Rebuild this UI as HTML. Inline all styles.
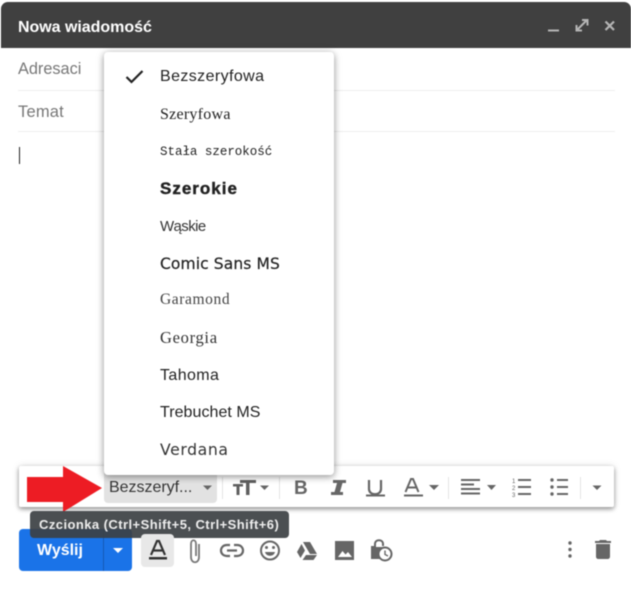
<!DOCTYPE html>
<html lang="pl"><head><meta charset="utf-8"><title>Nowa wiadomość</title>
<style>
html,body{margin:0;padding:0;background:#fff}
body{width:631px;height:589px;overflow:hidden;position:relative;font-family:"Liberation Sans",sans-serif}
#r{position:absolute;left:0;top:0;width:631px;height:589px;filter:blur(.5px)}
.a{position:absolute;white-space:nowrap}
.m{position:absolute;left:160px;color:#222;line-height:20px;white-space:nowrap}
svg{position:absolute;overflow:visible}
.sep{position:absolute;top:477px;width:1px;height:22px;background:#e3e3e3}
</style></head><body><div id="r">
<div class="a" style="left:1px;top:2px;width:630px;height:46px;background:#404040;border-radius:7px 7px 0 0"></div>
<div class="a" style="left:18px;top:18px;font-size:16px;font-weight:bold;color:#fff;line-height:20px;letter-spacing:-.03px">Nowa wiadomość</div>
<svg style="left:0;top:0" width="631" height="60" fill="none" stroke="#b5b5b5">
<path d="M548 30.500H559" stroke-width="2"/>
<path d="M577 30L587 20M582 20H587.500V25.500M576.500 25V30.500H582" stroke-width="2"/>
<path d="M605.500 21.500L614 30M614 21.500L605.500 30" stroke-width="2.200"/>
</svg>
<div class="a" style="left:18px;top:59px;font-size:16.300px;color:#777;line-height:20px">Adresaci</div>
<div class="a" style="left:18px;top:90px;width:597px;height:1px;background:#eee"></div>
<div class="a" style="left:18px;top:102px;font-size:16.500px;color:#777;line-height:20px;letter-spacing:.2px">Temat</div>
<div class="a" style="left:18px;top:131px;width:597px;height:1px;background:#eee"></div>
<div class="a" style="left:19px;top:147px;width:1px;height:17px;background:#222"></div>

<div class="a" style="left:19px;top:466px;width:595px;height:41px;background:#fff;border-radius:2px;box-shadow:0 2px 5px rgba(0,0,0,.4),0 0 8px rgba(0,0,0,.12)"></div>
<div class="a" style="left:104px;top:466px;width:113px;height:37px;background:#e2e2e2;border-radius:0 0 4px 4px"></div>
<div class="a" style="left:109px;top:478px;font-size:16px;color:#333;line-height:20px;letter-spacing:-.02px">Bezszeryf...</div>
<svg style="left:0;top:460px" width="631" height="129">
<g fill="#666">
<path d="M203 25.500H212L207.500 30Z"/>
<path d="M260 25.500H269L264.500 30Z"/>
<path d="M429 25H439L434 30Z"/>
<path d="M487 25H496L491.500 30Z"/>
<path d="M592.500 25.500H601.500L597 30Z"/>
</g>
<g fill="#5f5f5f">
<path d="M233 24H243V26.500H239.500V35H236.500V26.500H233Z"/>
<path d="M240 20H256V23H249.500V35H246V23H240Z"/>
</g>
<text x="294" y="34" font-size="19" font-weight="bold" fill="#666" font-family="Liberation Sans">B</text>
<path d="M333 20H346V23H342.500L340 32H343V35H331V32H334.500L337 23H333Z" fill="#666"/>
<path d="M369 20V29C369 36 381 36 381 29V20" fill="none" stroke="#666" stroke-width="2.200"/>
<rect x="366" y="34.500" width="19" height="2" fill="#666"/>
<path d="M405.500 32L411 19H413L418.500 32" fill="none" stroke="#666" stroke-width="2"/>
<path d="M408 27.500H416" stroke="#666" stroke-width="2"/>
<rect x="404" y="34.500" width="19" height="2" fill="#666"/>
<path d="M461 20H480M461 24.500H474M461 29H480M461 33.500H480" stroke="#666" stroke-width="2" fill="none"/>
<path d="M518 20H531M518 27H531M518 34H531" stroke="#666" stroke-width="2" fill="none"/>
<text x="512" y="23" font-size="6" fill="#666">1</text><text x="512" y="30" font-size="6" fill="#666">2</text><text x="512" y="37" font-size="6" fill="#666">3</text>
<path d="M557 20H568M557 27H568M557 34H568" stroke="#666" stroke-width="2" fill="none"/>
<circle cx="552" cy="20" r="1.700" fill="#666"/><circle cx="552" cy="27" r="1.700" fill="#666"/><circle cx="552" cy="34" r="1.700" fill="#666"/>
</svg>
<div class="sep" style="left:222px"></div><div class="sep" style="left:279px"></div><div class="sep" style="left:448px"></div><div class="sep" style="left:580px"></div>

<svg style="left:27px;top:465px" width="76" height="48"><path d="M0 12H36V1L75 23L36 47V37H0Z" fill="#ed1c24"/></svg>

<div class="a" style="left:19px;top:529px;width:113px;height:42px;background:#1a73e8;border-radius:4px"></div>
<div class="a" style="left:103px;top:529px;width:1px;height:42px;background:#1559b5"></div>
<div class="a" style="left:37px;top:541px;font-size:16px;font-weight:bold;color:#fff;line-height:20px">Wyślij</div>
<svg style="left:112px;top:547px" width="12" height="8"><path d="M1 1H11L6 6Z" fill="#fff"/></svg>

<div class="a" style="left:30px;top:511px;width:259px;height:27px;background:rgba(60,64,67,.92);border-radius:4px"></div>
<div class="a" style="left:39px;top:515px;font-size:13px;font-weight:bold;color:#eee;line-height:19px;letter-spacing:.44px">Czcionka (Ctrl+Shift+5, Ctrl+Shift+6)</div>

<div class="a" style="left:141px;top:534px;width:33px;height:33px;background:#e8e8e8;border-radius:4px"></div>
<svg style="left:0;top:520px" width="631" height="69">
<g transform="translate(0,9)">
<path d="M151 26L157 12H159L165 26M153.500 21.500H162.500" fill="none" stroke="#333" stroke-width="2.200"/>
<rect x="149" y="28" width="18" height="2.500" fill="#333"/>
<path d="M199 15V28C199 35 191 35 191 28V15C191 10 196 10 196 15V27" fill="none" stroke="#777" stroke-width="1.800"/>
<path d="M230 16H227C219 16 219 27 227 27H230M234 16H237C245 16 245 27 237 27H234M227 21.500H237" fill="none" stroke="#666" stroke-width="2.200"/>
<circle cx="270" cy="21.500" r="9" fill="none" stroke="#666" stroke-width="2"/>
<circle cx="266.500" cy="18.500" r="1.500" fill="#666"/><circle cx="273.500" cy="18.500" r="1.500" fill="#666"/>
<path d="M265 23H275C274 28 266 28 265 23Z" fill="#666"/>
<path d="M303 13H310L317 25H310ZM301.500 15L305 21.500L300.500 29L297 23ZM306 26H317L313.500 31H302.500Z" fill="#666"/>
<path d="M335 12H354V31H335Z" fill="#666"/>
<path d="M338 28L342.500 22L345.500 25.500L348 23L352 28Z" fill="#fff"/>
<path d="M372 29V18H375V15C375 10 383 10 383 15V17" fill="none" stroke="#666" stroke-width="2"/>
<path d="M371 18H384V30H371Z" fill="#666"/>
<circle cx="385" cy="25" r="6.500" fill="#fff" stroke="#666" stroke-width="2"/>
<path d="M385 21.500V25.500L388 27" fill="none" stroke="#666" stroke-width="1.400"/>
</g>
<circle cx="570" cy="23" r="1.700" fill="#666"/><circle cx="570" cy="29.500" r="1.700" fill="#666"/><circle cx="570" cy="36" r="1.700" fill="#666"/>
<path d="M596 24H610V36.500C610 38 609 39 607.500 39H598.500C597 39 596 38 596 36.500ZM595 21H599L600 20H606L607 21H611V23H595Z" fill="#666"/>
</svg>

<div class="a" style="left:104px;top:52px;width:230px;height:423px;background:#fff;border-radius:4px;box-shadow:0 2px 7px rgba(0,0,0,.35),0 0 10px rgba(0,0,0,.12)"></div>
<svg style="left:125px;top:69px" width="20" height="16"><path d="M1.500 8L6.500 13L17.500 2" fill="none" stroke="#222" stroke-width="2.200"/></svg>
<div class="m" style="top:67px;font-size:16px;letter-spacing:.4px">Bezszeryfowa</div>
<div class="m" style="top:105px;font:16px/20px 'Liberation Serif',serif;letter-spacing:.25px">Szeryfowa</div>
<div class="m" style="top:142px;font:12.500px/20px 'Liberation Mono',monospace;letter-spacing:-.02px">Stała szerokość</div>
<div class="m" style="top:179px;font-size:17px;font-weight:bold;letter-spacing:1px;-webkit-text-stroke:.4px #222">Szerokie</div>
<div class="m" style="top:217px;font-size:15px;color:#333;letter-spacing:-.6px">Wąskie</div>
<div class="m" style="top:254px;font:16px/20px 'DejaVu Sans',sans-serif;letter-spacing:.1px;transform:scaleX(.97);transform-origin:0 0;-webkit-text-stroke:.2px #222">Comic Sans MS</div>
<div class="m" style="top:290px;font:15.500px/20px 'Liberation Serif',serif;color:#444;letter-spacing:.6px">Garamond</div>
<div class="m" style="top:328px;font:16.500px/20px 'Liberation Serif',serif;color:#333;letter-spacing:.7px">Georgia</div>
<div class="m" style="top:366px;font-size:16px;letter-spacing:.4px">Tahoma</div>
<div class="m" style="top:403px;font-size:16px;letter-spacing:.05px">Trebuchet MS</div>
<div class="m" style="top:440px;font:16px/20px 'DejaVu Sans',sans-serif;color:#333;letter-spacing:.6px;transform:scaleX(.98);transform-origin:0 0">Verdana</div>
</div></body></html>
